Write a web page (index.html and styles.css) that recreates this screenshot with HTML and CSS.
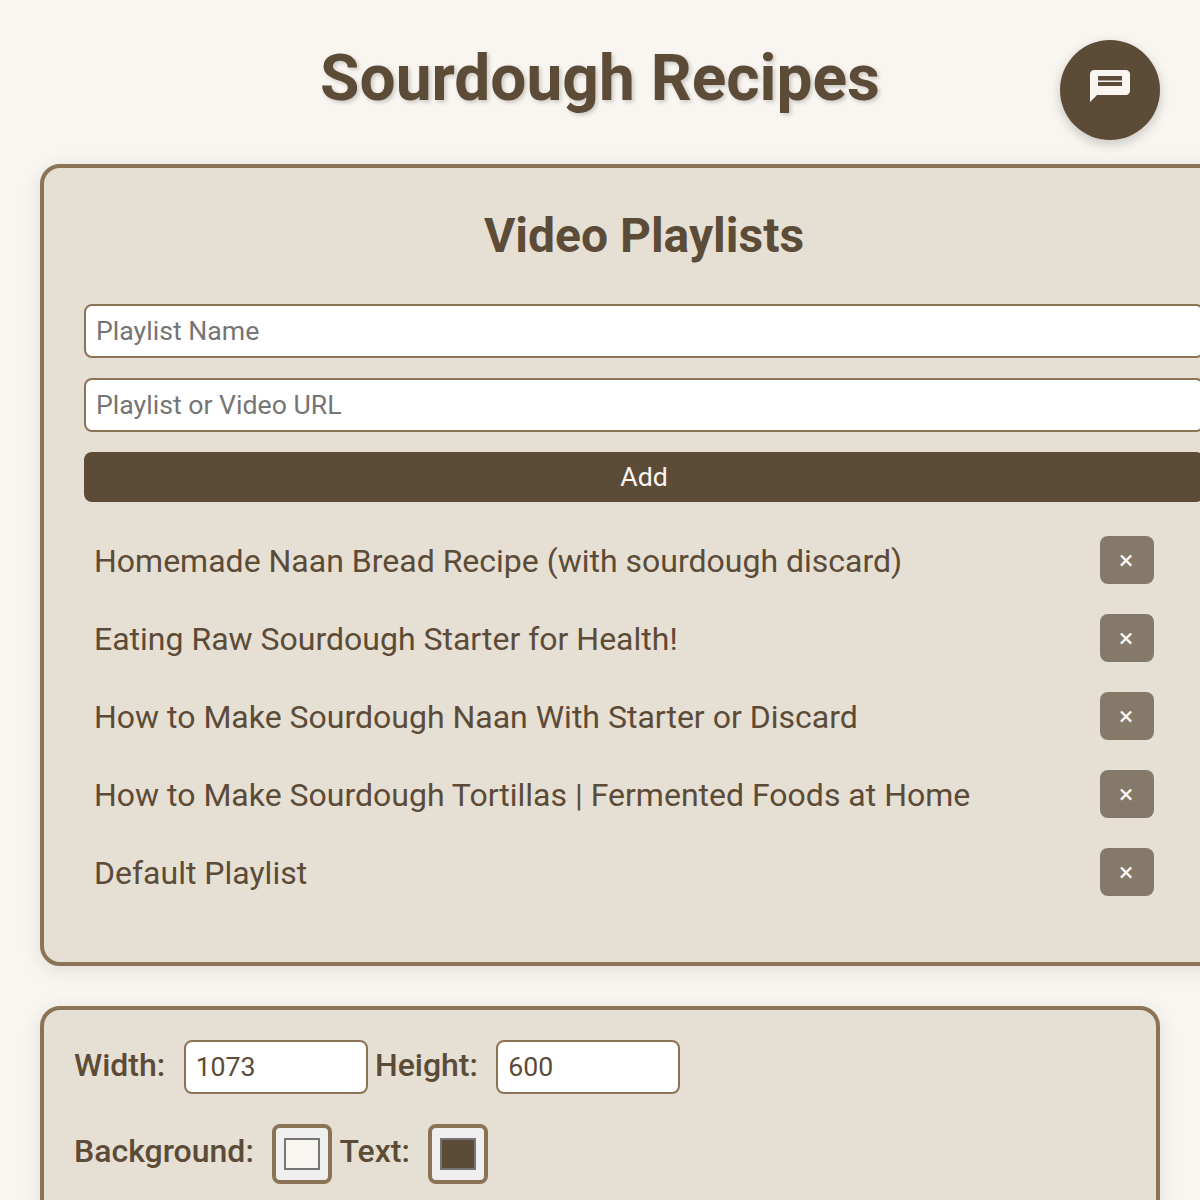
FILE: index.html
```html
<!DOCTYPE html>
<html lang="en">
<head>
  <meta charset="UTF-8">
  <meta name="viewport" content="width=device-width, initial-scale=1.0">
  <title>Sourdough Recipes</title>
  <link rel="stylesheet" href="styles.css">
</head>
<body>
  <h1>Sourdough Recipes</h1>
  <button class="chat-btn" type="button" aria-label="Chat">
    <svg viewBox="0 0 24 24" width="48" height="48">
      <path fill-rule="evenodd" d="M20 2H4c-1.1 0-2 .9-2 2v14l3.5-3.5H20c1.1 0 2-.9 2-2V4c0-1.1-.9-2-2-2zM6 5h12v2.3H6zM6 8h12v2H6z"/>
    </svg>
  </button>

  <section class="panel playlists">
    <h2>Video Playlists</h2>
    <form class="playlist-form">
      <input type="text" placeholder="Playlist Name">
      <input type="text" placeholder="Playlist or Video URL">
      <button type="button" class="add-btn">Add</button>
    </form>
    <ul class="playlist-list">
      <li><span class="playlist-name">Homemade Naan Bread Recipe (with sourdough discard)</span><button type="button" class="remove-btn">×</button></li>
      <li><span class="playlist-name">Eating Raw Sourdough Starter for Health!</span><button type="button" class="remove-btn">×</button></li>
      <li><span class="playlist-name">How to Make Sourdough Naan With Starter or Discard</span><button type="button" class="remove-btn">×</button></li>
      <li><span class="playlist-name">How to Make Sourdough Tortillas | Fermented Foods at Home</span><button type="button" class="remove-btn">×</button></li>
      <li><span class="playlist-name">Default Playlist</span><button type="button" class="remove-btn">×</button></li>
    </ul>
  </section>

  <section class="panel settings">
    <div class="setting-row">
      <label for="player-width">Width:</label>
      <input id="player-width" class="num-input" type="number" value="1073">
      <label for="player-height">Height:</label>
      <input id="player-height" class="num-input" type="number" value="600">
    </div>
    <div class="setting-row color-row">
      <label for="bg-color">Background:</label>
      <input id="bg-color" class="color-input" type="color" value="#f9f6f1">
      <label for="text-color">Text:</label>
      <input id="text-color" class="color-input" type="color" value="#5c4b37">
    </div>
  </section>
</body>
</html>
```

FILE: styles.css
```css
html {
  overflow-x: hidden;
}
body {
  font-family: Roboto, "Liberation Sans", sans-serif;
  background-color: #f9f6f1;
  color: #5c4b37;
  margin: 0;
  padding: 40px;
  position: relative;
  overflow-x: hidden;
}
h1 {
  font-size: 64px;
  font-weight: 700;
  line-height: 78px;
  margin: 0 0 46px;
  text-align: center;
  text-shadow: 2px 2px 4px rgba(0, 0, 0, 0.2);
}
h2 {
  font-size: 48px;
  font-weight: 700;
  line-height: 56px;
  margin: 0 0 40px;
  text-align: center;
}
.chat-btn {
  position: absolute;
  top: 40px;
  right: 40px;
  width: 100px;
  height: 100px;
  padding: 0;
  border: none;
  border-radius: 50%;
  background-color: #5c4b37;
  box-shadow: 0 4px 12px rgba(0, 0, 0, 0.2);
  display: flex;
  align-items: center;
  justify-content: center;
}
.chat-btn svg {
  fill: #f9f6f1;
}
.panel {
  background-color: #e6dfd3;
  border: 4px solid #8b7355;
  border-radius: 20px;
  box-shadow: 0 4px 20px rgba(0, 0, 0, 0.1);
}
.playlists {
  width: 1120px;
  padding: 40px;
  margin-bottom: 40px;
}
.playlist-form {
  display: flex;
  flex-direction: column;
  gap: 20px;
}
.playlist-form input, .num-input {
  box-sizing: border-box;
  height: 54px;
  padding: 0 10px;
  border: 2px solid #8b7355;
  border-radius: 8px;
  background-color: #fff;
  color: #5c4b37;
  font-family: inherit;
  font-size: 26.67px;
}
.add-btn {
  height: 50px;
  border: none;
  border-radius: 8px;
  background-color: #5c4b37;
  color: #f9f6f1;
  font-family: inherit;
  font-size: 26.67px;
}
.playlist-list {
  list-style: none;
  margin: 24px 0 0;
  padding: 0 40px 6px 0;
}
.playlist-list li {
  display: flex;
  align-items: center;
  justify-content: space-between;
  padding: 10px;
  margin-bottom: 10px;
  font-size: 32px;
}
.playlist-name {
  padding-top: 2px;
}
.remove-btn {
  width: 54px;
  height: 48px;
  padding: 0 2px 0 0;
  border: none;
  border-radius: 8px;
  background-color: #85796a;
  color: #f9f6f1;
  font-family: inherit;
  font-size: 26.67px;
}
.settings {
  box-sizing: border-box;
  width: 1120px;
  padding: 30px;
}
.setting-row {
  display: flex;
  align-items: center;
  gap: 7.3px;
  margin-bottom: 30px;
}
.setting-row label {
  font-size: 32px;
  font-weight: 500;
  margin: 0 11.1px 5px 0;
}
.color-row label {
  margin-bottom: 7px;
}
.num-input {
  width: 184px;
}
.color-input {
  box-sizing: border-box;
  width: 60px;
  height: 60px;
  padding: 0;
  border: 4px solid #8b7355;
  border-radius: 8px;
  background-color: #efefef;
}
.color-input::-webkit-color-swatch-wrapper {
  padding: 10px 8px;
}
.color-input::-webkit-color-swatch {
  border: 2px solid #767676;
  border-radius: 0;
}
```
